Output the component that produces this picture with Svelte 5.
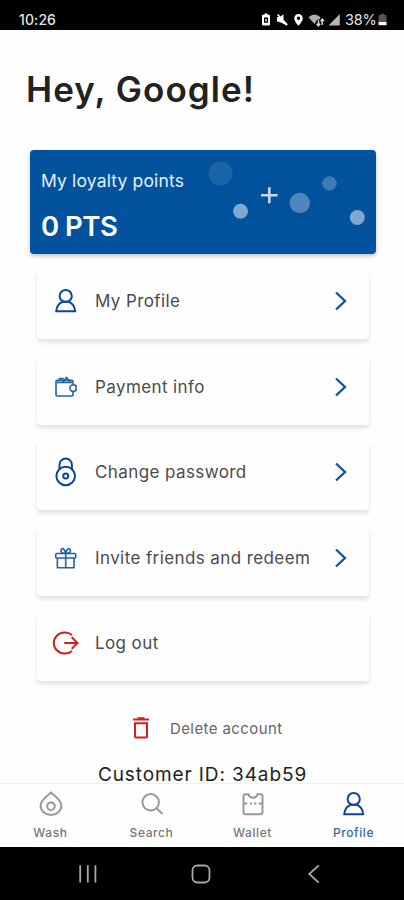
<script lang="ts">
	type Row = { icon: string; label: string; chevron: boolean };

	const rows: Row[] = [
		{ icon: 'user', label: 'My Profile', chevron: true },
		{ icon: 'payment', label: 'Payment info', chevron: true },
		{ icon: 'lock', label: 'Change password', chevron: true },
		{ icon: 'gift', label: 'Invite friends and redeem', chevron: true },
		{ icon: 'logout', label: 'Log out', chevron: false }
	];

	const tabs = [
		{ icon: 'drop', label: 'Wash' },
		{ icon: 'search', label: 'Search' },
		{ icon: 'ticket', label: 'Wallet' },
		{ icon: 'user', label: 'Profile' }
	];

	let active = $state('Profile');
</script>

{#snippet icon(name: string)}
	<svg class="icon" class:red={name === 'logout' || name === 'trash'} viewBox="0 0 30 30">
		{#if name === 'user'}
			<circle cx="14.7" cy="10" r="6.1" />
			<path d="M5.2 25.3c.2-5 3.5-8.8 6.8-9.6h5.4c3.3.8 6.6 4.6 6.8 9.6z" />
		{:else if name === 'payment'}
			<g class="thin">
				<path d="M22 12.3V9.4q0-1.2-1.2-1.2H6.2Q5 8.2 5 9.4v13.4Q5 24 6.2 24h14.6q1.2 0 1.2-1.2v-3.4" />
				<path d="M6 10.4h15M8.5 8V6.6h4.3M12 9.8l3.5-4.3L19 9.8" />
				<path d="M25 13.6l-2.6-.8a3.4 3.4 0 0 0-3.6 3.4 3.4 3.4 0 0 0 3.6 3.2l2.6-.8z" />
			</g>
		{:else if name === 'lock'}
			<path d="M8.5 12.4V7.8a6.2 6.2 0 0 1 12.4 0v4.6" />
			<circle cx="14.7" cy="19" r="9.3" />
			<circle cx="14.7" cy="19" r="2.5" />
		{:else if name === 'gift'}
			<g class="thin">
				<rect x="4.7" y="10.5" width="20" height="4.5" rx="1" />
				<path d="M6.4 15v9.8H23V15M14.7 10.5v14.3" />
				<path d="M14.5 10.3c-3.5 0-5.3-1.5-4.4-3.7 1-2 4-.8 4.4 3.7zM14.9 10.3c3.5 0 5.3-1.5 4.4-3.7-1-2-4-.8-4.4 3.7z" />
			</g>
		{:else if name === 'logout'}
			<path d="M21 7a11 10.6 0 1 0 0 16M13.2 15h13M20.7 9.2l5.8 5.8-5.8 5.8" />
		{:else if name === 'trash'}
			<path d="M7 6.6h16M11.6 5.2h6.8M9 10.2h12v13.2q0 1-1 1H10q-1 0-1-1z" />
		{:else if name === 'drop'}
			<path d="M15 3.6c3.5 3.3 10.4 7.5 10.4 13a10.4 9.4 0 0 1-20.8 0c0-5.5 6.9-9.7 10.4-13z" />
			<circle cx="15" cy="17.2" r="3.8" />
		{:else if name === 'search'}
			<circle cx="13.7" cy="13.3" r="8.2" />
			<path d="M19.6 19.2l5.8 5.8" />
		{:else if name === 'ticket'}
			<path d="M7.3 5.3h3.2q.8 3.4 4.5 3.4t4.5-3.4h3.2q1.8 0 1.8 1.8v16.4q0 1.8-1.8 1.8H7.3q-1.8 0-1.8-1.8V7.1q0-1.8 1.8-1.8z" />
			<path d="M5.5 14.5h3.8M11.8 14.5h2.4M16 14.5h2.4M20.7 14.5h3.8" />
		{/if}
	</svg>
{/snippet}

<div class="screen">
	<header class="status">
		<span class="clock">10:26</span>
		<svg class="indicators" width="80" height="16" viewBox="0 0 80 16">
			<path fill="#fff" fill-rule="evenodd" d="M3.5 1.5h3v1.3h1.8q.7 0 .7.7v9q0 1-1 1H2q-1 0-1-1v-9q0-.7.7-.7h1.8zM3 5.5v5.3h4V5.5zM4.3 7h1.4v2.5H4.3z" />
			<path fill="#fff" d="M16 5h3l3.5-2.8v6.3l4.3 3.8-1.3 1.5-2.5-1.8-5-2.3h-2zM16 3l1.2-1 9.3 10-1 1z" />
			<path fill="#fff" fill-rule="evenodd" d="M37.5 2a4.3 4.3 0 0 0-4.3 4.3c0 3 4.3 7.5 4.3 7.5s4.3-4.5 4.3-7.5A4.3 4.3 0 0 0 37.5 2zm0 2.5a1.7 1.7 0 1 1 0 3.4 1.7 1.7 0 0 1 0-3.4z" />
			<path fill="#b0b0b0" d="M47.5 5.2q6-5.2 12 0l-1 2.3h-2.2L53.5 12z" />
			<path fill="none" stroke="#d8d8d8" stroke-width="1.5" d="M57.5 14V8.2M61.2 7.5V13M55.5 11.8l2 2 1.6-2M59.6 9l1.6-1.8L63 9" />
			<path fill="#b5b5b5" d="M67.5 13.5h11.3V2z" />
		</svg>
		<span class="percent">38%</span>
		<svg width="9" height="16" viewBox="0 0 9 16">
			<path fill="#555" d="M.5 4.2q0-1.3 1.3-1.3h1V1.8h3.4v1.1h1q1.3 0 1.3 1.3V10h-8z" />
			<path fill="#fff" d="M.5 10h8v3.2h-8z" />
		</svg>
	</header>

	<main>
		<h1>Hey, Google!</h1>

		<section class="points">
			<div class="points-label">My loyalty points</div>
			<div class="points-value">0 PTS</div>
			<svg class="bubbles" width="346" height="104" viewBox="0 0 346 104">
				<circle cx="190.5" cy="23.5" r="12" opacity="0.12" />
				<circle cx="210.5" cy="61.3" r="7.5" opacity="0.6" />
				<circle cx="269.8" cy="53" r="10.2" opacity="0.37" />
				<circle cx="299.5" cy="33.5" r="7.2" opacity="0.28" />
				<circle cx="327.3" cy="67.5" r="7.5" opacity="0.6" />
				<path class="plus" d="M231 45.2h16.5M239.3 37.2v16" />
			</svg>
		</section>

		<ul class="rows">
			{#each rows as row (row.label)}
				<li class="row">
					{@render icon(row.icon)}
					<span class="row-label">{row.label}</span>
					{#if row.chevron}
						<svg class="chevron" width="14" height="22" viewBox="0 0 14 22">
							<path d="M2 2.5l9 8.5-9 8.5" />
						</svg>
					{/if}
				</li>
			{/each}
		</ul>

		<div class="delete">
			{@render icon('trash')}
			<span>Delete account</span>
		</div>
		<div class="customer">Customer ID: 34ab59</div>
	</main>

	<nav class="tabs">
		{#each tabs as tab (tab.label)}
			<button class="tab" class:active={active === tab.label} onclick={() => (active = tab.label)}>
				{@render icon(tab.icon)}
				<span>{tab.label}</span>
			</button>
		{/each}
	</nav>

	<footer class="system">
		<svg width="18" height="20" viewBox="0 0 18 20"><path d="M1.2 1.2v17.4M8.8 1.2v17.4M16.4 1.2v17.4" /></svg>
		<svg width="20" height="20" viewBox="0 0 20 20"><rect x="1.5" y="1.5" width="17" height="17" rx="5" /></svg>
		<svg width="14" height="20" viewBox="0 0 14 20"><path d="M11.8 1.3L2.2 10l9.6 8.7" /></svg>
	</footer>
</div>

<style>
	:global(body) {
		margin: 0;
		background: #fff;
	}

	.screen {
		display: flex;
		flex-direction: column;
		width: 404px;
		height: 900px;
		overflow: hidden;
		background: #fefefe;
		font-family: Inter, 'Liberation Sans', sans-serif;
		color: #222;
	}

	.status {
		display: flex;
		flex: none;
		align-items: center;
		box-sizing: border-box;
		height: 30px;
		padding: 9px 17px 0 19px;
		background: #000;
		color: #e4e4e4;
		font-size: 14px;
		line-height: 20px;
	}

	.clock {
		font-weight: 500;
		letter-spacing: 0.1px;
	}

	.indicators {
		margin-left: auto;
	}

	.percent {
		width: 33px;
		margin-left: 4px;
		font-size: 14.5px;
		letter-spacing: -0.2px;
	}

	main {
		flex: 1;
		min-height: 0;
	}

	h1 {
		margin: 0 0 0 26px;
		padding-top: 37px;
		font-size: 35px;
		font-weight: 600;
		line-height: 44px;
		letter-spacing: 1.05px;
	}

	.points {
		position: relative;
		box-sizing: border-box;
		width: 346px;
		height: 104px;
		margin: 39px 0 0 30px;
		padding: 19px 11px 0;
		border-radius: 4px;
		background: #02529d;
		box-shadow: 0 2px 4px rgba(0, 20, 60, 0.25);
		color: #fff;
	}

	.points-label {
		font-size: 17.5px;
		line-height: 24px;
		letter-spacing: 0.15px;
		color: #e8f0f8;
	}

	.points-value {
		margin-top: 16px;
		font-size: 27.5px;
		font-weight: 600;
		line-height: 34px;
		letter-spacing: -0.5px;
	}

	.bubbles {
		position: absolute;
		top: 0;
		left: 0;
		fill: #d3e5f5;
	}

	.plus {
		stroke: #c3d9ee;
		stroke-width: 2.6;
	}

	.rows {
		display: flex;
		flex-direction: column;
		gap: 17.5px;
		width: 332px;
		margin: 17px 0 0 37px;
		padding: 0;
		list-style: none;
	}

	.row {
		display: flex;
		align-items: center;
		box-sizing: border-box;
		height: 68px;
		padding: 0 21px 8px 14px;
		border-radius: 4px;
		background: #fefefe;
		box-shadow: 0 3px 4px rgba(30, 45, 85, 0.14);
	}

	.row-label {
		flex: 1;
		margin-left: 14px;
		font-size: 17px;
		line-height: 24px;
		letter-spacing: 0.4px;
		color: #4b4b4b;
	}

	.icon {
		flex: none;
		width: 30px;
		height: 30px;
		fill: none;
		stroke: #0c4796;
		stroke-width: 2;
	}

	.thin {
		stroke: #21619e;
		stroke-width: 1.6;
	}

	.icon.red {
		stroke: #d01f1f;
	}

	.chevron {
		fill: none;
		stroke: #10519f;
		stroke-width: 2.3;
	}

	.delete {
		display: flex;
		align-items: center;
		gap: 14px;
		height: 30px;
		margin: 32px 0 0 126px;
		font-size: 15px;
		letter-spacing: 0.4px;
		color: #666;
	}

	.customer {
		margin-top: 24px;
		padding-left: 1px;
		font-size: 19px;
		line-height: 16px;
		letter-spacing: 0.9px;
		text-align: center;
	}

	.tabs {
		display: flex;
		flex: none;
		box-sizing: border-box;
		height: 64px;
		border-top: 1px solid #f0f0f0;
		background: #fefefe;
	}

	.tab {
		display: flex;
		flex: 1;
		flex-direction: column;
		align-items: center;
		padding: 5px 0 0;
		border: 0;
		background: none;
		color: #777;
		font: 500 12px/16px Inter, 'Liberation Sans', sans-serif;
		letter-spacing: 0.6px;
	}

	.tab span {
		margin-top: 6px;
	}

	.tab .icon {
		stroke: #999;
	}

	.tab.active {
		color: #2a6ba9;
	}

	.tab.active .icon {
		stroke: #0c4796;
	}

	.system {
		display: flex;
		flex: none;
		align-items: center;
		justify-content: space-between;
		box-sizing: border-box;
		height: 53px;
		padding: 0 83px 0 79px;
		background: #000;
		fill: none;
		stroke: #a8a8a8;
		stroke-width: 1.8;
	}

	.system svg:nth-child(2) {
		margin-right: 2px;
	}
</style>
